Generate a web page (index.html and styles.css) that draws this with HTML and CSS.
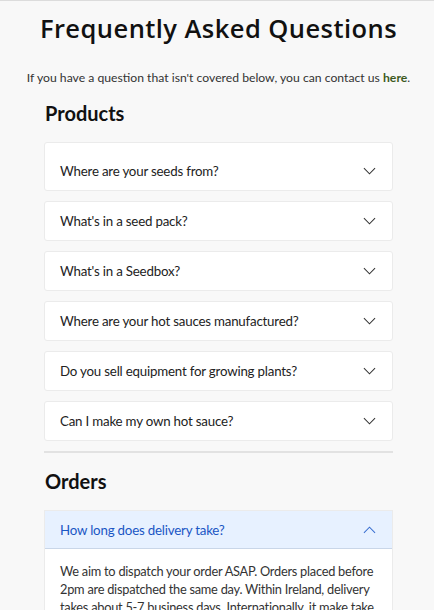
FILE: index.html
```html
<!DOCTYPE html>
<html lang="en">
<head>
<meta charset="utf-8">
<title>FAQ</title>
<link rel="stylesheet" href="styles.css">
</head>
<body>
<div class="topline"></div>
<main class="page">
  <h1 class="title">Frequently Asked Questions</h1>
  <p class="intro">If you have a question that isn't covered below, you can contact us <a href="#" class="link">here</a>.</p>

  <section class="group">
    <h2 class="group-title">Products</h2>
    <div class="list">
      <div class="item item-first"><span class="q">Where are your seeds from?</span><svg class="chev" viewBox="0 0 14 8"><path d="M1 1l6 6 6-6"/></svg></div>
      <div class="item"><span class="q">What's in a seed pack?</span><svg class="chev" viewBox="0 0 14 8"><path d="M1 1l6 6 6-6"/></svg></div>
      <div class="item"><span class="q">What's in a Seedbox?</span><svg class="chev" viewBox="0 0 14 8"><path d="M1 1l6 6 6-6"/></svg></div>
      <div class="item"><span class="q">Where are your hot sauces manufactured?</span><svg class="chev" viewBox="0 0 14 8"><path d="M1 1l6 6 6-6"/></svg></div>
      <div class="item"><span class="q">Do you sell equipment for growing plants?</span><svg class="chev" viewBox="0 0 14 8"><path d="M1 1l6 6 6-6"/></svg></div>
      <div class="item"><span class="q">Can I make my own hot sauce?</span><svg class="chev" viewBox="0 0 14 8"><path d="M1 1l6 6 6-6"/></svg></div>
    </div>
  </section>

  <hr class="divider">

  <section class="group">
    <h2 class="group-title orders">Orders</h2>
    <div class="list">
      <div class="open">
        <div class="item item-open"><span class="q">How long does delivery take?</span><svg class="chev" viewBox="0 0 14 8"><path d="M1 7l6-6 6 6"/></svg></div>
        <div class="answer">We aim to dispatch your order ASAP. Orders placed before 2pm are dispatched the same day. Within Ireland, delivery takes about 5-7 business days. Internationally, it make take up to 2-3 weeks.</div>
      </div>
    </div>
  </section>
</main>
</body>
</html>
```
FILE: styles.css
```css
html, body {
  margin: 0;
  padding: 0;
  background: #f8f8f8;
}
body {
  font-family: Lato, "DejaVu Sans", sans-serif;
  color: #222;
}
.topline {
  height: 1px;
  background: #dcdcdc;
}
.page {
  padding: 0 41px 0 44px;
}
.title {
  margin: 9px -20px 0;
  text-align: center;
  font-family: "Open Sans", sans-serif;
  font-weight: 600;
  font-size: 25.5px;
  letter-spacing: 0.45px;
  line-height: 36px;
  color: #111;
}
.intro {
  margin: 23px -30px 0;
  text-align: center;
  font-family: Lato, sans-serif;
  font-size: 12.2px;
  line-height: 18px;
  color: #333;
}
.link {
  color: #3d5a1e;
  font-weight: 700;
  text-decoration: none;
}
.group-title {
  margin: 13px 0 0 1px;
  font-family: Lato, sans-serif;
  font-weight: 700;
  font-size: 20px;
  line-height: 26px;
  color: #111;
}
.list {
  margin-top: 16px;
  display: flex;
  flex-direction: column;
  gap: 10px;
}
.item {
  height: 40px;
  box-sizing: border-box;
  background: #fff;
  border: 1px solid #ebebeb;
  border-radius: 3px;
  display: flex;
  align-items: center;
  justify-content: space-between;
  padding: 0 16px 0 15px;
}
.item-first {
  height: 49px;
  padding-top: 9px;
}
.q {
  font-family: Lato, sans-serif;
  font-size: 13.3px;
  letter-spacing: -0.2px;
  color: #222;
}
.chev {
  width: 13px;
  height: 8px;
  fill: none;
  stroke: #333;
  stroke-width: 1.1;
}
.divider {
  margin: 10px 0 0;
  border: 0;
  height: 2px;
  background: #e2e2e2;
}
.orders {
  margin-top: 15px;
}
.open {
  background: #fff;
  border: 1px solid #ebebeb;
}
.item-open {
  height: 38px;
  border: 0;
  border-bottom: 1px solid #c9d6e8;
  border-radius: 0;
  background: #e7f1ff;
}
.item-open .q {
  color: #1a56c4;
}
.item-open .chev {
  stroke: #3a6fd0;
}
.answer {
  padding: 13px 15px 12px 15px;
  font-family: Lato, sans-serif;
  font-size: 12.8px;
  letter-spacing: -0.25px;
  line-height: 18px;
  color: #333;
}
```
